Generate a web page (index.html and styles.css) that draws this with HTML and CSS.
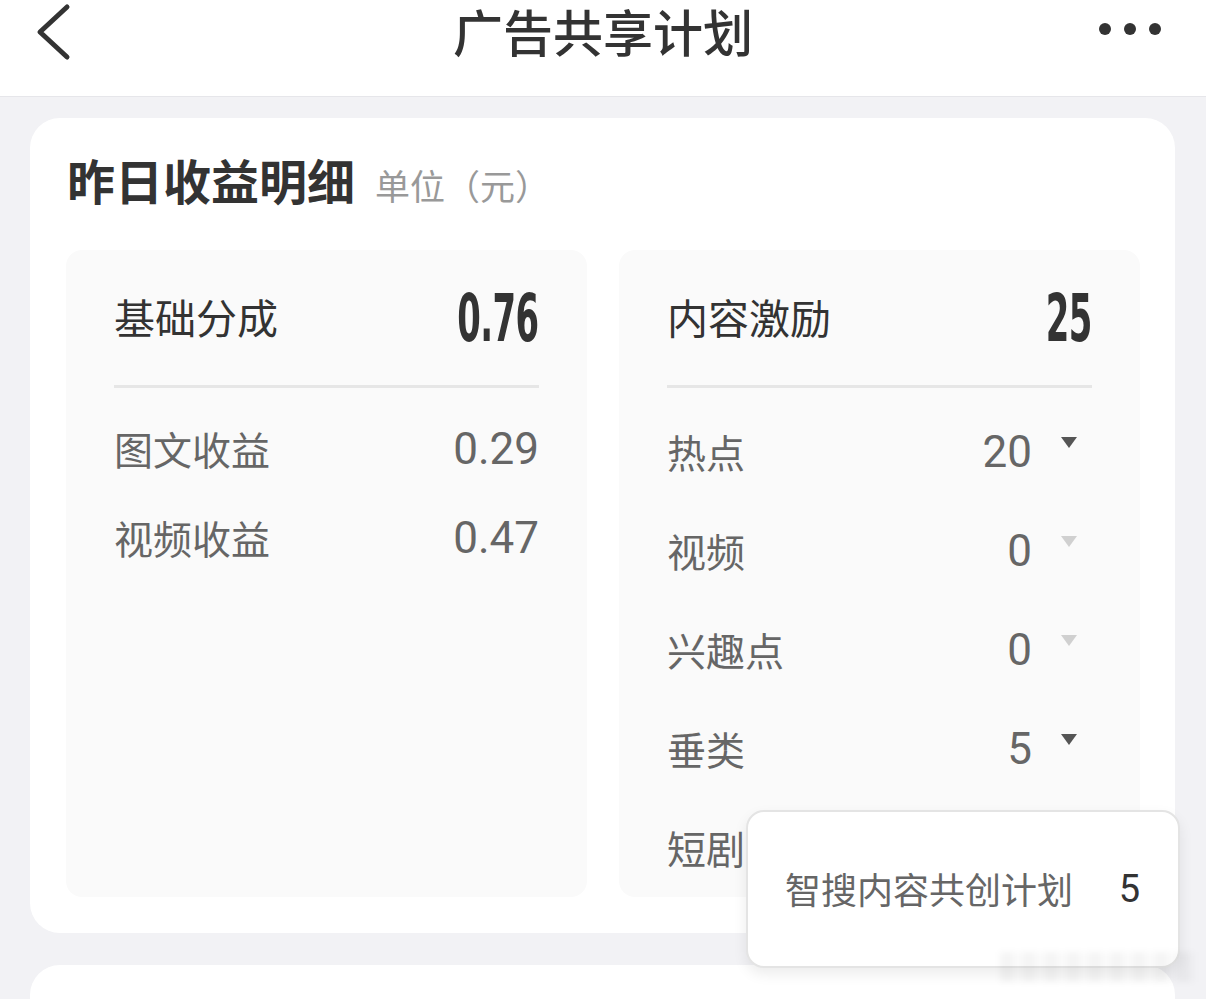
FILE: index.html
```html
<!DOCTYPE html>
<html lang="zh-CN">
<head>
<meta charset="utf-8">
<title>广告共享计划</title>
<link rel="stylesheet" href="styles.css">
</head>
<body>
<div class="page">
  <header class="topbar">
    <svg class="back" width="40" height="60" viewBox="0 0 40 60"><path d="M33 6 L6 31 L33 56" fill="none" stroke="#333" stroke-width="5" stroke-linecap="round" stroke-linejoin="round"/></svg>
    <h1 class="title">广告共享计划</h1>
    <svg class="more" width="70" height="20" viewBox="0 0 70 20"><circle cx="8" cy="10" r="6" fill="#333"/><circle cx="33" cy="10" r="6" fill="#333"/><circle cx="58" cy="10" r="6" fill="#333"/></svg>
  </header>

  <section class="card">
    <div class="card-head"><span class="h-main">昨日收益明细</span><span class="h-unit">单位（元）</span></div>
    <div class="panels">
      <div class="panel">
        <div class="panel-top"><span class="p-label">基础分成</span><span class="big"><span class="big-in">0.76</span></span></div>
        <div class="divider"></div>
        <div class="rows rows-left">
          <div class="row"><span class="r-label">图文收益</span><span class="r-val">0.29</span></div>
          <div class="row"><span class="r-label">视频收益</span><span class="r-val">0.47</span></div>
        </div>
      </div>
      <div class="panel">
        <div class="panel-top"><span class="p-label">内容激励</span><span class="big"><span class="big-in">25</span></span></div>
        <div class="divider"></div>
        <div class="rows rows-right">
          <div class="row"><span class="r-label">热点</span><span class="r-end"><span class="r-val">20</span><span class="tri"></span></span></div>
          <div class="row"><span class="r-label">视频</span><span class="r-end"><span class="r-val">0</span><span class="tri tri-off"></span></span></div>
          <div class="row"><span class="r-label">兴趣点</span><span class="r-end"><span class="r-val">0</span><span class="tri tri-off"></span></span></div>
          <div class="row"><span class="r-label">垂类</span><span class="r-end"><span class="r-val">5</span><span class="tri"></span></span></div>
          <div class="row"><span class="r-label">短剧</span></div>
        </div>
      </div>
    </div>
  </section>

  <section class="card card-next"></section>

  <div class="popup"><span class="pop-label">智搜内容共创计划</span><span class="pop-val">5</span></div>
  <div class="watermark"></div>
</div>
</body>
</html>
```

FILE: styles.css
```css
* { box-sizing: border-box; margin: 0; padding: 0; }
html, body { width: 1206px; height: 999px; overflow: hidden; }
body {
  background: #f2f2f5;
  font-family: "Noto Sans CJK SC", "Noto Sans", sans-serif;
  color: #333;
}
.page { position: relative; width: 1206px; height: 999px; }

.topbar {
  height: 97px;
  background: #fff;
  border-bottom: 1px solid #e6e6ea;
  display: grid;
  grid-template-columns: 1fr auto 1fr;
  align-items: start;
  padding: 0 39px;
}
.back { display: block; margin-top: 1px; margin-left: -5px; }
.more { display: block; margin-top: 19px; justify-self: end; }
.title {
  font-size: 50px;
  line-height: 52px;
  padding-top: 4px;
  font-weight: 500;
  color: #333;
  text-align: center;
  white-space: nowrap;
}

.card {
  margin: 21px 31px 0 30px;
  background: #fff;
  border-radius: 30px;
  padding: 0 35px 36px 36px;
}
.card-head {
  display: flex;
  align-items: baseline;
  padding-top: 30px;
  height: 132px;
  line-height: 62px;
}
.h-main { font-size: 48px; font-weight: 700; color: #333; margin-left: 1px; }
.h-unit { font-size: 35px; color: #999; margin-left: 20px; }

.panels { display: flex; gap: 32px; }
.panel {
  flex: 1;
  height: 647px;
  background: #fafafa;
  border-radius: 16px;
  padding: 28px 48px 0 48px;
}
.panel-top {
  height: 80px;
  display: flex;
  align-items: center;
  justify-content: space-between;
}
.p-label { font-size: 41px; color: #333; line-height: 60px; margin-top: -5px; }
.big { display: flex; justify-content: flex-end; width: 120px; line-height: 80px; margin-top: 2px; }
.big-in {
  display: inline-block;
  font-family: "DejaVu Sans Condensed", "Liberation Sans Narrow", sans-serif;
  font-weight: 700;
  font-size: 66px;
  color: #333;
  white-space: nowrap;
  transform: scaleX(0.57);
  transform-origin: right center;
  letter-spacing: -1px;
}
.divider { margin-top: 27px; height: 3px; background: #e6e6e6; }

.rows { display: flex; flex-direction: column; }
.rows-left { margin-top: 31px; gap: 29px; }
.rows-right { margin-top: 34px; gap: 39px; }
.row {
  height: 60px;
  display: flex;
  align-items: center;
  justify-content: space-between;
}
.r-label { font-size: 39px; color: #666; margin-top: -3px; }
.r-val { font-family: Roboto, "Noto Sans", sans-serif; font-size: 44px; color: #666; line-height: 60px; }
.r-end { display: flex; align-items: center; padding-right: 15px; }
.tri {
  width: 0; height: 0;
  margin-left: 29px;
  margin-top: -20px;
  border-left: 8.5px solid transparent;
  border-right: 8.5px solid transparent;
  border-top: 11px solid #555;
}
.tri-off { border-top-color: #d0d0d0; }

.card-next { margin-top: 32px; height: 80px; border-radius: 30px 30px 0 0; padding: 0; }

.popup {
  position: absolute;
  left: 746px; top: 810px;
  width: 434px; height: 158px;
  background: #fff;
  border: 2px solid #e4e4e4;
  border-radius: 18px;
  box-shadow: 0 6px 14px rgba(0,0,0,0.08);
  display: flex;
  align-items: center;
  justify-content: space-between;
  padding: 0 38px 0 37px;
}
.pop-label { font-size: 36px; color: #666; margin-top: -3px; }
.pop-val { font-family: Roboto, "Noto Sans", sans-serif; font-size: 38px; color: #333; }

.watermark {
  position: absolute;
  left: 1000px; top: 952px;
  width: 195px; height: 30px;
  background: repeating-linear-gradient(90deg, rgba(0,0,0,0.04) 0 14px, rgba(0,0,0,0.015) 14px 22px);
  filter: blur(3px);
}
```
